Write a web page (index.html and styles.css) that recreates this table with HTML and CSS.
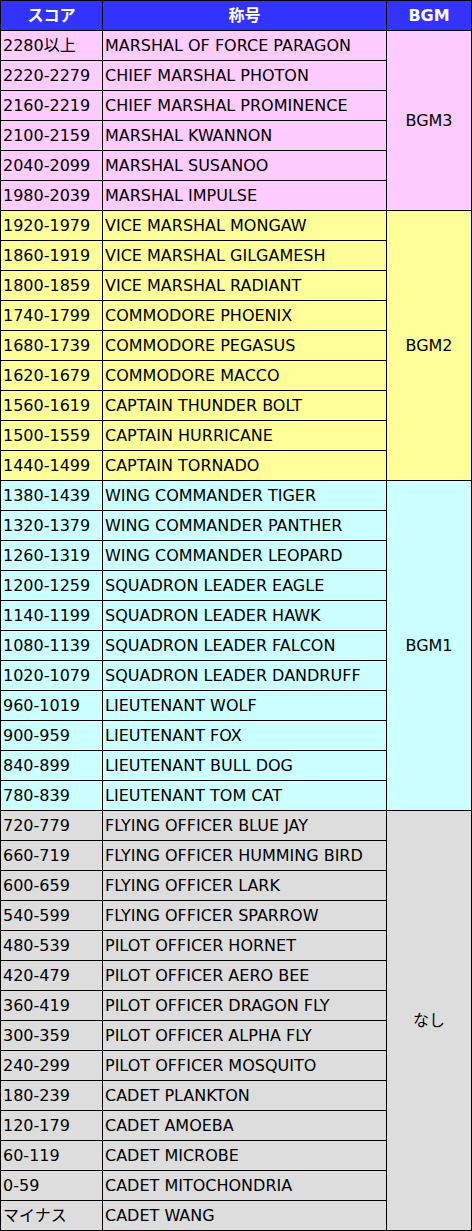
FILE: index.html
```html
<!DOCTYPE html>
<html lang="ja">
<head>
<meta charset="utf-8">
<link rel="stylesheet" href="styles.css">
</head>
<body>
<table class="rank">
<colgroup><col class="c1"><col class="c2"><col class="c3"></colgroup>
<thead>
<tr><th>スコア</th><th>称号</th><th>BGM</th></tr>
</thead>
<tbody>
<tr class="pink"><td>2280以上</td><td>MARSHAL OF FORCE PARAGON</td><td class="bgm" rowspan="6">BGM3</td></tr>
<tr class="pink"><td>2220-2279</td><td>CHIEF MARSHAL PHOTON</td></tr>
<tr class="pink"><td>2160-2219</td><td>CHIEF MARSHAL PROMINENCE</td></tr>
<tr class="pink"><td>2100-2159</td><td>MARSHAL KWANNON</td></tr>
<tr class="pink"><td>2040-2099</td><td>MARSHAL SUSANOO</td></tr>
<tr class="pink"><td>1980-2039</td><td>MARSHAL IMPULSE</td></tr>
<tr class="yellow"><td>1920-1979</td><td>VICE MARSHAL MONGAW</td><td class="bgm" rowspan="9">BGM2</td></tr>
<tr class="yellow"><td>1860-1919</td><td>VICE MARSHAL GILGAMESH</td></tr>
<tr class="yellow"><td>1800-1859</td><td>VICE MARSHAL RADIANT</td></tr>
<tr class="yellow"><td>1740-1799</td><td>COMMODORE PHOENIX</td></tr>
<tr class="yellow"><td>1680-1739</td><td>COMMODORE PEGASUS</td></tr>
<tr class="yellow"><td>1620-1679</td><td>COMMODORE MACCO</td></tr>
<tr class="yellow"><td>1560-1619</td><td>CAPTAIN THUNDER BOLT</td></tr>
<tr class="yellow"><td>1500-1559</td><td>CAPTAIN HURRICANE</td></tr>
<tr class="yellow"><td>1440-1499</td><td>CAPTAIN TORNADO</td></tr>
<tr class="cyan"><td>1380-1439</td><td>WING COMMANDER TIGER</td><td class="bgm" rowspan="11">BGM1</td></tr>
<tr class="cyan"><td>1320-1379</td><td>WING COMMANDER PANTHER</td></tr>
<tr class="cyan"><td>1260-1319</td><td>WING COMMANDER LEOPARD</td></tr>
<tr class="cyan"><td>1200-1259</td><td>SQUADRON LEADER EAGLE</td></tr>
<tr class="cyan"><td>1140-1199</td><td>SQUADRON LEADER HAWK</td></tr>
<tr class="cyan"><td>1080-1139</td><td>SQUADRON LEADER FALCON</td></tr>
<tr class="cyan"><td>1020-1079</td><td>SQUADRON LEADER DANDRUFF</td></tr>
<tr class="cyan"><td>960-1019</td><td>LIEUTENANT WOLF</td></tr>
<tr class="cyan"><td>900-959</td><td>LIEUTENANT FOX</td></tr>
<tr class="cyan"><td>840-899</td><td>LIEUTENANT BULL DOG</td></tr>
<tr class="cyan"><td>780-839</td><td>LIEUTENANT TOM CAT</td></tr>
<tr class="gray"><td>720-779</td><td>FLYING OFFICER BLUE JAY</td><td class="bgm" rowspan="14">なし</td></tr>
<tr class="gray"><td>660-719</td><td>FLYING OFFICER HUMMING BIRD</td></tr>
<tr class="gray"><td>600-659</td><td>FLYING OFFICER LARK</td></tr>
<tr class="gray"><td>540-599</td><td>FLYING OFFICER SPARROW</td></tr>
<tr class="gray"><td>480-539</td><td>PILOT OFFICER HORNET</td></tr>
<tr class="gray"><td>420-479</td><td>PILOT OFFICER AERO BEE</td></tr>
<tr class="gray"><td>360-419</td><td>PILOT OFFICER DRAGON FLY</td></tr>
<tr class="gray"><td>300-359</td><td>PILOT OFFICER ALPHA FLY</td></tr>
<tr class="gray"><td>240-299</td><td>PILOT OFFICER MOSQUITO</td></tr>
<tr class="gray"><td>180-239</td><td>CADET PLANKTON</td></tr>
<tr class="gray"><td>120-179</td><td>CADET AMOEBA</td></tr>
<tr class="gray"><td>60-119</td><td>CADET MICROBE</td></tr>
<tr class="gray"><td>0-59</td><td>CADET MITOCHONDRIA</td></tr>
<tr class="gray"><td>マイナス</td><td>CADET WANG</td></tr>
</tbody>
</table>
</body>
</html>
```

FILE: styles.css
```css
html, body {
  margin: 0;
  padding: 0;
  background: #fff;
}
.rank {
  border-collapse: collapse;
  table-layout: fixed;
  width: 471px;
  font-family: "DejaVu Sans", "Noto Sans CJK JP", sans-serif;
  font-size: 16px;
  color: #000;
}
.c1 { width: 102px; }
.c2 { width: 284px; }
.c3 { width: 85px; }
.rank tr {
  height: 30px;
}
.rank th, .rank td {
  border: 1px solid #000;
  padding: 0 0 0 2px;
  white-space: nowrap;
  overflow: hidden;
  vertical-align: middle;
  text-align: left;
  line-height: 20px;
}
.rank th {
  background: #3333ff;
  color: #fff;
  font-weight: bold;
  text-align: center;
  padding: 0;
}
.rank td.bgm {
  text-align: center;
  padding: 0;
}
.pink td { background: #ffccff; }
.yellow td { background: #ffff99; }
.cyan td { background: #ccffff; }
.gray td { background: #dddddd; }
```
